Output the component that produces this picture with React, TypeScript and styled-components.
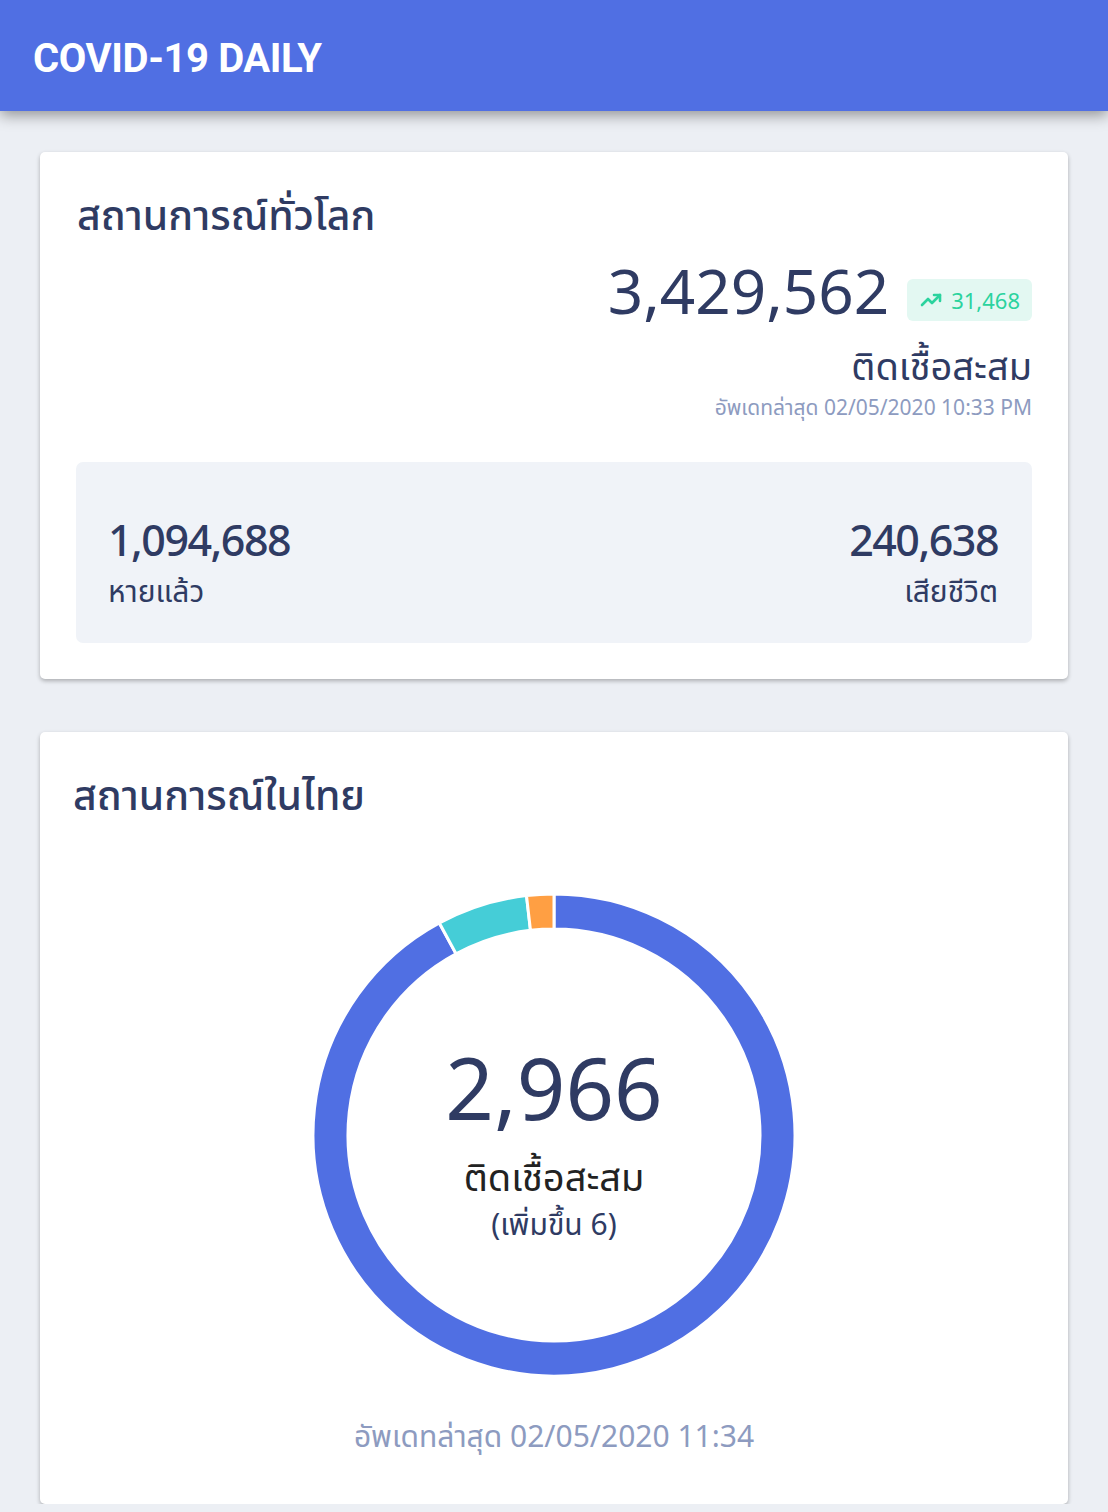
import React from "react";
import styled, { createGlobalStyle } from "styled-components";

const Global = createGlobalStyle`
  html, body { margin: 0; padding: 0; background: #eceff4; }
  body { font-family: "Noto Sans", "Noto Sans Thai", "Loma", "Garuda", sans-serif; color: #2f3b63; }
  * { box-sizing: border-box; }
`;

const Header = styled.header`
  height: 111px;
  background: #506fe3;
  display: flex;
  align-items: center;
  padding: 5px 33px 0;
  box-shadow: 0 4px 14px rgba(0, 0, 0, 0.4);
  position: relative;
  z-index: 1;
`;

const Brand = styled.h1`
  margin: 0;
  font-family: Roboto, "Liberation Sans", sans-serif;
  font-weight: 700;
  font-size: 40px;
  color: #ffffff;
  letter-spacing: -0.4px;
`;

const Main = styled.main`
  padding: 41px 40px 0;
  display: flex;
  flex-direction: column;
  gap: 53px;
`;

const Card = styled.section`
  background: #ffffff;
  border-radius: 5px;
  box-shadow: 0 2px 4px rgba(0, 0, 0, 0.28);
  padding: 36px;
`;

const Title = styled.h2<{ $shift?: number }>`
  margin: 0 0 0 ${(p) => p.$shift ?? 0}px;
  font-size: 41px;
  font-weight: 500;
  line-height: 52px;
  color: #2f3b63;
`;

const TotalBlock = styled.div`
  display: flex;
  flex-direction: column;
  align-items: flex-end;
  margin-top: 14px;
`;

const TotalRow = styled.div`
  display: flex;
  align-items: center;
  gap: 18px;
  height: 72px;
`;

const BigNumber = styled.div`
  font-size: 62px;
  font-weight: 400;
  line-height: 72px;
  color: #2f3b63;
`;

const Badge = styled.div`
  display: flex;
  align-items: center;
  gap: 8px;
  height: 42px;
  padding: 0 12px;
  background: #e3f8f2;
  border-radius: 6px;
  color: #2bd39e;
  font-size: 22px;
  margin-top: 20px;
`;

const TotalLabel = styled.div`
  font-size: 38px;
  line-height: 50px;
  color: #2f3b63;
  margin-top: 14px;
`;

const Updated = styled.div`
  font-size: 21px;
  line-height: 30px;
  color: #8d9bc0;
  margin-top: 2px;
`;

const StatsBox = styled.div`
  margin-top: 40px;
  height: 181px;
  background: #f0f3f8;
  border-radius: 7px;
  padding: 53px 34px 0 32px;
  display: flex;
  align-items: flex-start;
  justify-content: space-between;
`;

const Stat = styled.div<{ $align: "left" | "right" }>`
  display: flex;
  flex-direction: column;
  gap: 6px;
  align-items: ${(p) => (p.$align === "left" ? "flex-start" : "flex-end")};
`;

const StatNumber = styled.div`
  font-size: 43px;
  font-weight: 500;
  line-height: 50px;
  color: #2f3b63;
  letter-spacing: -1.5px;
`;

const StatLabel = styled.div`
  font-size: 30px;
  line-height: 40px;
  color: #2f3b63;
`;

const ChartWrap = styled.div`
  position: relative;
  width: 484px;
  height: 484px;
  margin: 73px auto 0;
`;

const ChartCenter = styled.div`
  position: absolute;
  inset: 0;
  display: flex;
  flex-direction: column;
  align-items: center;
  justify-content: center;
  padding-top: 16px;
`;

const CenterNumber = styled.div`
  font-size: 85px;
  line-height: 90px;
  color: #2f3b63;
`;

const CenterLabel = styled.div`
  font-size: 38px;
  line-height: 50px;
  color: #222222;
  margin-top: 19px;
`;

const CenterSub = styled.div`
  font-size: 30px;
  line-height: 40px;
  color: #2f3b63;
  margin-top: 3px;
`;

const Footer = styled.div`
  text-align: center;
  font-size: 30px;
  line-height: 40px;
  color: #8d9bc0;
  margin-top: 39px;
  padding-bottom: 12px;
`;

const TrendIcon = () => (
  <svg width="24" height="24" viewBox="0 0 24 24" fill="none" stroke="#2bd39e" strokeWidth="2.6" strokeLinecap="round" strokeLinejoin="round">
    <polyline points="3,17 9,11 13,15 21,7" />
    <polyline points="15,7 21,7 21,13" />
  </svg>
);

const segments = [
  { value: 2732, color: "#506fe3" },
  { value: 180, color: "#45cdd7" },
  { value: 54, color: "#ff9f43" },
];

function arcPath(cx: number, cy: number, r0: number, r1: number, a0: number, a1: number) {
  const p = (r: number, a: number) => [cx + r * Math.sin(a), cy - r * Math.cos(a)];
  const large = a1 - a0 > Math.PI ? 1 : 0;
  const [x0, y0] = p(r1, a0);
  const [x1, y1] = p(r1, a1);
  const [x2, y2] = p(r0, a1);
  const [x3, y3] = p(r0, a0);
  return `M${x0} ${y0} A${r1} ${r1} 0 ${large} 1 ${x1} ${y1} L${x2} ${y2} A${r0} ${r0} 0 ${large} 0 ${x3} ${y3} Z`;
}

const Donut = () => {
  const total = segments.reduce((s, x) => s + x.value, 0);
  let acc = 0;
  return (
    <svg width="484" height="484" viewBox="0 0 484 484">
      {segments.map((s, i) => {
        const a0 = (acc / total) * Math.PI * 2;
        acc += s.value;
        const a1 = (acc / total) * Math.PI * 2;
        return (
          <path key={i} d={arcPath(242, 242, 206, 241, a0, a1)} fill={s.color} stroke="#ffffff" strokeWidth={3} />
        );
      })}
    </svg>
  );
};

export default function App() {
  return (
    <>
      <Global />
      <Header>
        <Brand>COVID-19 DAILY</Brand>
      </Header>
      <Main>
        <Card>
          <Title $shift={1}>สถานการณ์ทั่วโลก</Title>
          <TotalBlock>
            <TotalRow>
              <BigNumber>3,429,562</BigNumber>
              <Badge>
                <TrendIcon />
                31,468
              </Badge>
            </TotalRow>
            <TotalLabel>ติดเชื้อสะสม</TotalLabel>
            <Updated>อัพเดทล่าสุด 02/05/2020 10:33 PM</Updated>
          </TotalBlock>
          <StatsBox>
            <Stat $align="left">
              <StatNumber>1,094,688</StatNumber>
              <StatLabel>หายแล้ว</StatLabel>
            </Stat>
            <Stat $align="right">
              <StatNumber>240,638</StatNumber>
              <StatLabel>เสียชีวิต</StatLabel>
            </Stat>
          </StatsBox>
        </Card>
        <Card>
          <Title $shift={-3}>สถานการณ์ในไทย</Title>
          <ChartWrap>
            <Donut />
            <ChartCenter>
              <CenterNumber>2,966</CenterNumber>
              <CenterLabel>ติดเชื้อสะสม</CenterLabel>
              <CenterSub>(เพิ่มขึ้น 6)</CenterSub>
            </ChartCenter>
          </ChartWrap>
          <Footer>อัพเดทล่าสุด 02/05/2020 11:34</Footer>
        </Card>
      </Main>
    </>
  );
}
